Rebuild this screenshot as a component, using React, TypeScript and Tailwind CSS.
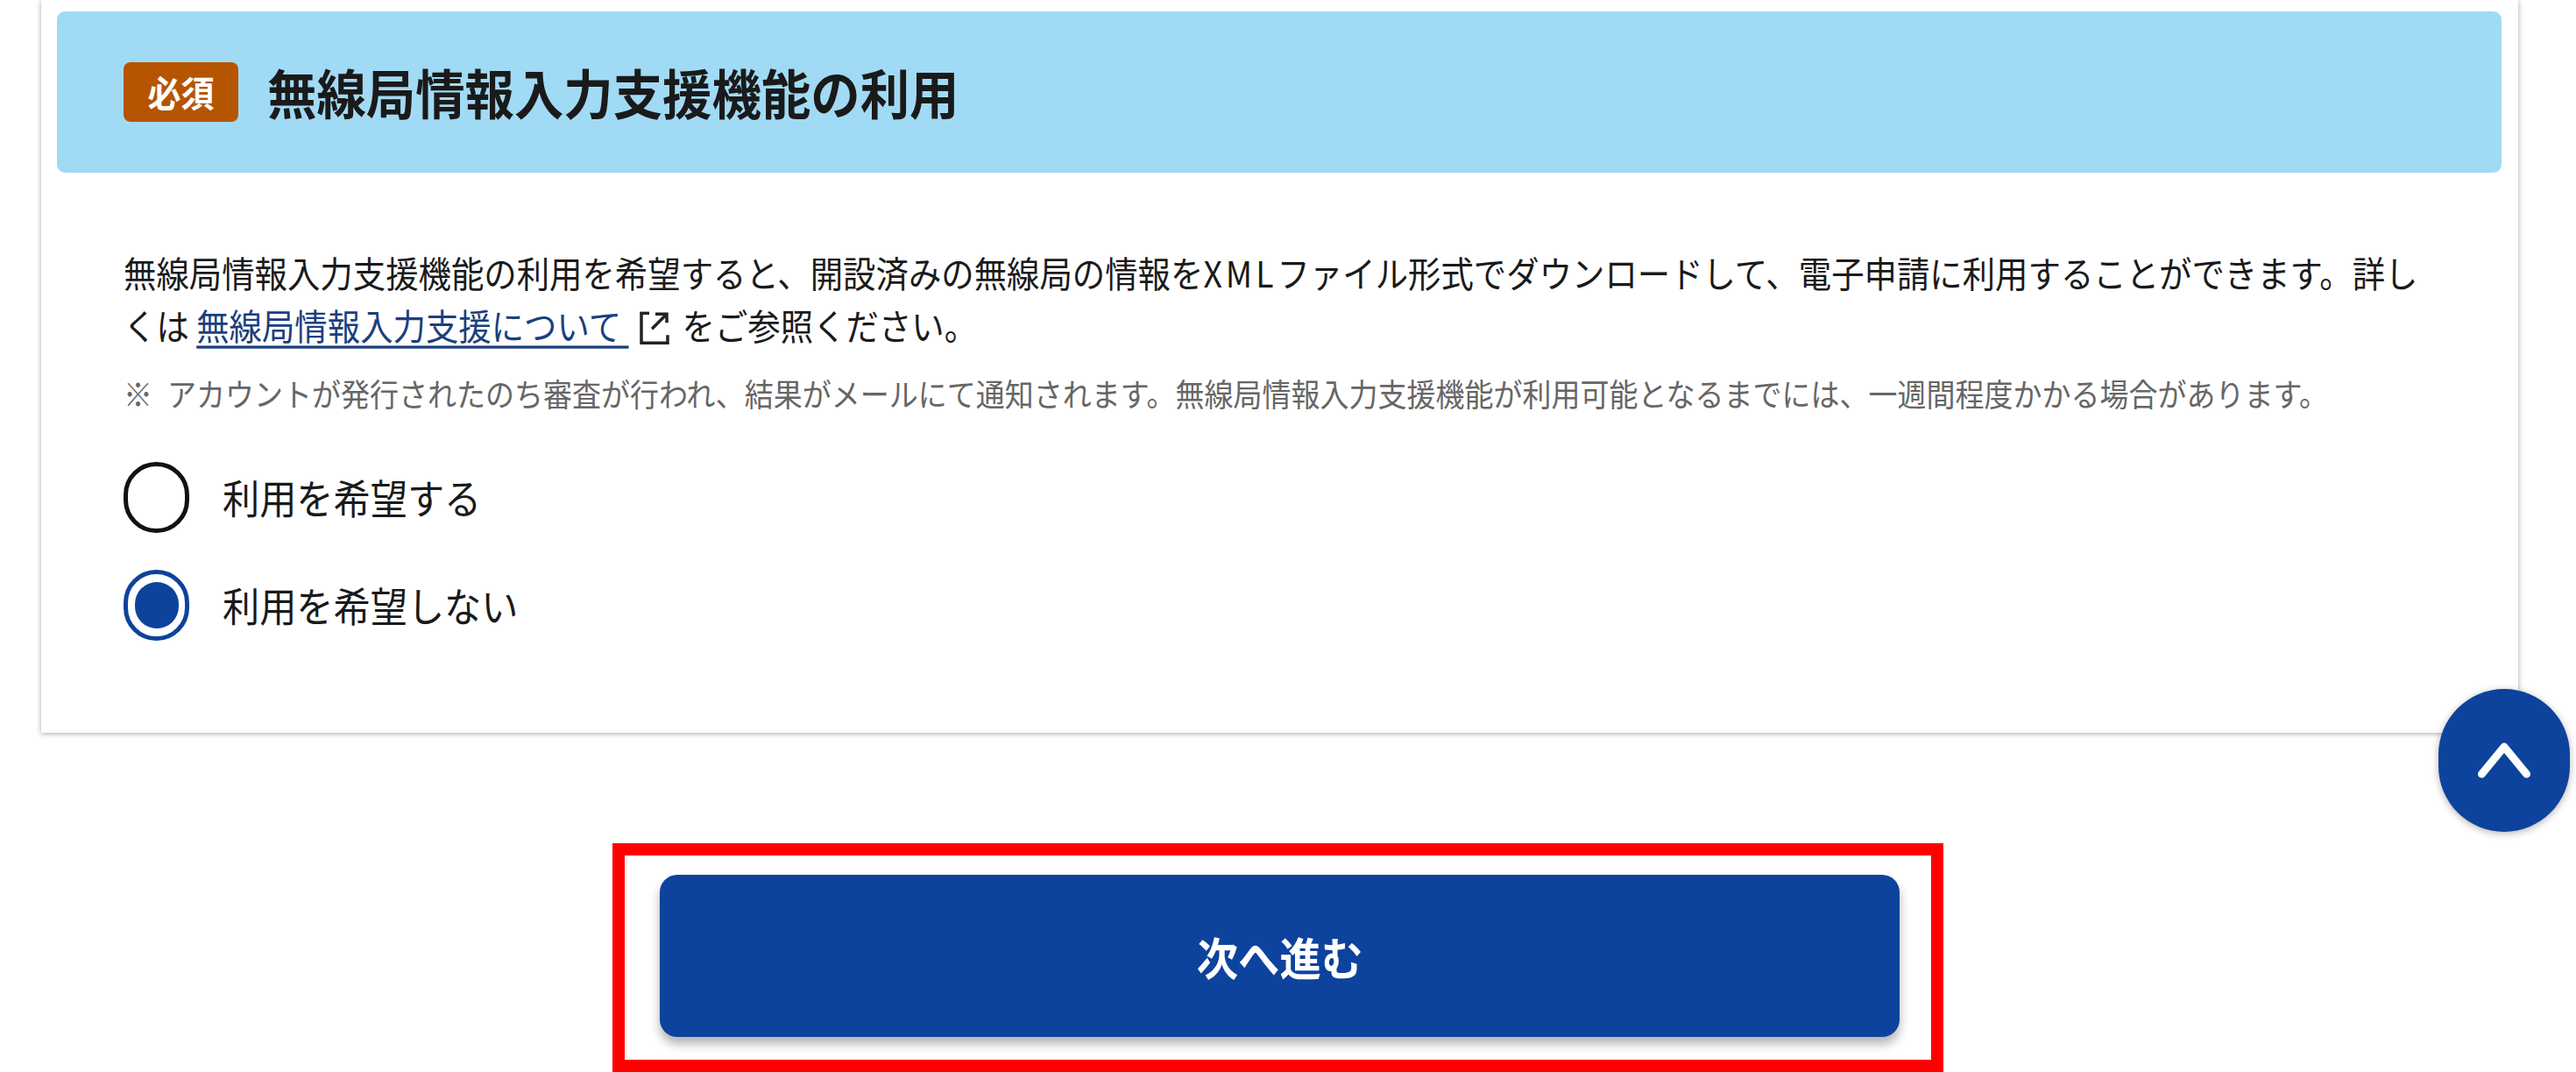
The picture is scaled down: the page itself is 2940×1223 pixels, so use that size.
const jp = "font-['Noto_Sans_CJK_JP','Noto_Sans',sans-serif]";

const RadioRow = ({ label, checked }: { label: string; checked: boolean }) => {
    return (
        <label className="flex h-[81px] items-center gap-[38px]">
            {checked ? (
                <span className="flex h-[81px] w-[75px] items-center justify-center rounded-full border-[5px] border-[#0d439c] bg-white">
                    <span className="h-[53px] w-[50px] rounded-full bg-[#0d439c]" />
                </span>
            ) : (
                <span className="h-[81px] w-[75px] rounded-full border-[5px] border-[#111111] bg-white" />
            )}
            <span className="-mt-[4px] scale-y-[1.09] text-[42.2px] leading-[60px] text-[#1a1a1a]">{label}</span>
        </label>
    );
};

export default function App() {
    return (
        <div className={`${jp} relative h-[1223px] w-[2940px] overflow-hidden bg-white`}>
            {/* form card, its top is scrolled out of the page */}
            <section className="ml-[47px] h-[836px] w-[2827px] bg-white pl-[18px] pr-[19px] pt-[13px] shadow-[0_1px_6px_rgba(0,0,0,0.35)]">
                <header className="flex h-[184px] items-center gap-[33px] rounded-[9px] bg-[#a1daf5] pl-[76px]">
                    <span className="flex h-[68px] w-[131px] items-center justify-center rounded-[8px] bg-[#b65500]">
                        <span className="scale-y-[1.09] text-[38px] font-bold leading-none text-white">必須</span>
                    </span>
                    <h2 className="scale-y-[1.09] text-[56.4px] font-bold leading-none text-[#1a1a1a]">無線局情報入力支援機能の利用</h2>
                </header>
                <div className="pl-[76px]">
                    <p className="mt-[89px] w-[2640px] scale-y-[1.09] text-[37.4px] leading-[55px] text-[#1a1a1a]">
                        無線局情報入力支援機能の利用を希望すると、開設済みの無線局の情報を<span className="tracking-[4px]">XML</span>ファイル形式でダウンロードして、電子申請に利用することができます。詳しくは{" "}
                        <a href="#" className="text-[#1b3f7e] underline underline-offset-[6px]">無線局情報入力支援について&nbsp;</a>
                        <svg className="ml-[12px] mr-[15px] inline-block h-[35px] w-[34px] align-[-5px]" viewBox="0 0 34 38" preserveAspectRatio="none" fill="none" stroke="#222222" strokeWidth="3.5">
                            <path d="M11 2H2V36H32V27" />
                            <path d="M18 3H31V13M31 3L14 20" />
                        </svg>
                        をご参照ください。
                    </p>
                    <p className="mt-[31px] h-[44px] scale-y-[1.09] whitespace-nowrap text-[33px] leading-[44px] text-[#666666]">
                        ※<span className="ml-[17px]">アカウントが発行されたのち審査が行われ、結果がメールにて通知されます。無線局情報入力支援機能が利用可能となるまでには、一週間程度かかる場合があります。</span>
                    </p>
                    <div className="mt-[56px] flex flex-col gap-[42px]">
                        <RadioRow label="利用を希望する" checked={false} />
                        <RadioRow label="利用を希望しない" checked={true} />
                    </div>
                </div>
            </section>

            {/* page top button */}
            <button className="absolute left-[2783px] top-[786px] flex h-[163px] w-[150px] items-center justify-center rounded-full bg-[#0d439c] shadow-[0_2px_8px_rgba(0,0,0,0.3)]">
                <svg width="62" height="44" viewBox="0 0 62 44" fill="none" stroke="#ffffff" strokeWidth="9" strokeLinecap="round" strokeLinejoin="round">
                    <path d="M5.5 37L31 6L56.5 37" />
                </svg>
            </button>

            {/* highlighted next step */}
            <div className="ml-[699px] mt-[126px] h-[261px] w-[1519px] border-[14px] border-[#ff0000] pl-[40px] pr-[36px] pt-[22px]">
                <button className="flex h-[185px] w-full items-center justify-center rounded-[20px] bg-[#0d439c] shadow-[0_8px_12px_rgba(0,0,0,0.3)]">
                    <span className="scale-y-[1.09] text-[47.4px] font-bold leading-none text-white">次へ進む</span>
                </button>
            </div>
        </div>
    );
}
